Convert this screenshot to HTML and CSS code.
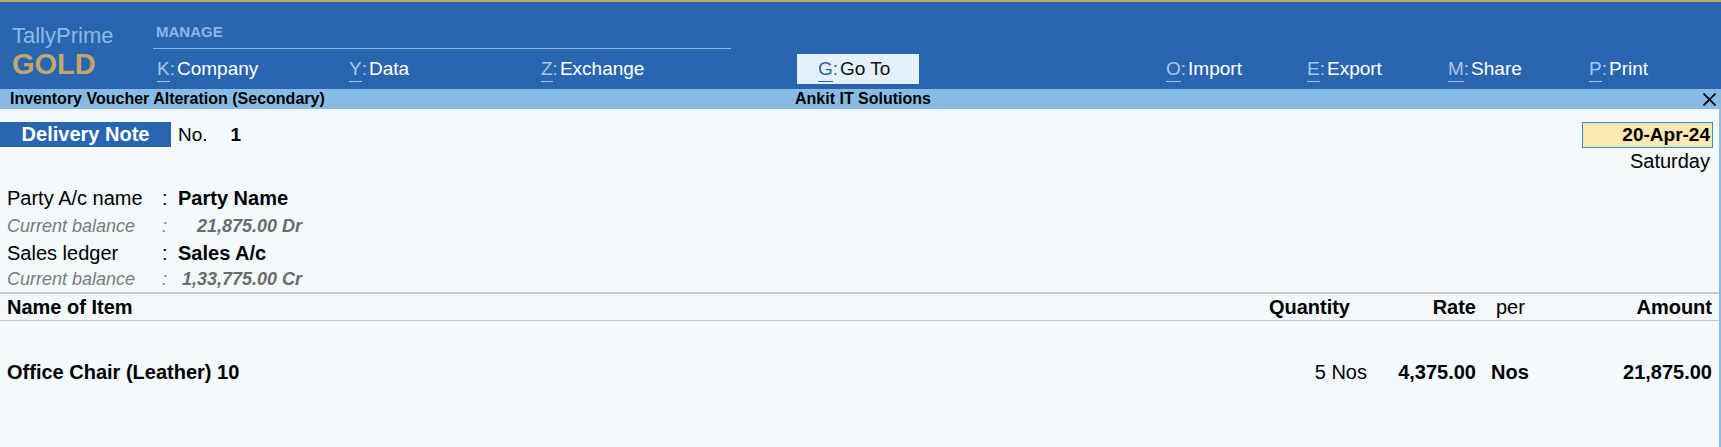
FILE: index.html
```html
<!DOCTYPE html>
<html lang="en">

<head>
    <meta charset="UTF-8">
    <meta name="viewport" content="width=device-width, initial-scale=1.0">
    <title>TallyPrime - Delivery Note</title>
    <link rel="stylesheet" href="styles.css">
</head>

<body>
    <div class="topbar">
        <div class="brand">
            <div class="brand-name">TallyPrime</div>
            <div class="brand-edition">GOLD</div>
        </div>

        <div class="menu-group">
            <div class="group-title">MANAGE</div>
            <div class="group-items">
                <span class="menu-item"><span class="key">K</span><span class="colon">:</span>Company</span>
                <span class="menu-item"><span class="key">Y</span><span class="colon">:</span>Data</span>
                <span class="menu-item"><span class="key">Z</span><span class="colon">:</span>Exchange</span>
            </div>
        </div>

        <div class="goto"><span class="key">G</span><span class="colon">:</span>Go To</div>

        <div class="tools">
            <span class="menu-item tool"><span class="key">O</span><span class="colon">:</span>Import</span>
            <span class="menu-item tool"><span class="key">E</span><span class="colon">:</span>Export</span>
            <span class="menu-item tool"><span class="key">M</span><span class="colon">:</span>Share</span>
            <span class="menu-item tool"><span class="key">P</span><span class="colon">:</span>Print</span>
        </div>
    </div>

    <div class="titlebar">
        <span class="title-left">Inventory Voucher Alteration (Secondary)</span>
        <span class="title-center">Ankit IT Solutions</span>
        <span class="title-close">
            <svg width="13" height="13" viewBox="0 0 13 13">
                <line x1="0.5" y1="0.5" x2="12.5" y2="12.5" stroke="#000" stroke-width="1.7" />
                <line x1="12.5" y1="0.5" x2="0.5" y2="12.5" stroke="#000" stroke-width="1.7" />
            </svg>
        </span>
    </div>

    <div class="voucher">
        <div class="voucher-head">
            <div class="voucher-type">
                <span class="type-badge">Delivery Note</span>
                <span class="no-label">No.</span>
                <span class="no-value">1</span>
            </div>
            <div class="voucher-date">
                <div class="date-box">20-Apr-24</div>
                <div class="day">Saturday</div>
            </div>
        </div>

        <div class="ledgers">
            <div class="field roomy">
                <span class="field-label">Party A/c name</span>
                <span class="field-sep">:</span>
                <span class="field-value">Party Name</span>
            </div>
            <div class="field sub roomy">
                <span class="field-label">Current balance</span>
                <span class="field-sep">:</span>
                <span class="field-value">21,875.00 Dr</span>
            </div>
            <div class="field">
                <span class="field-label">Sales ledger</span>
                <span class="field-sep">:</span>
                <span class="field-value">Sales A/c</span>
            </div>
            <div class="field sub">
                <span class="field-label">Current balance</span>
                <span class="field-sep">:</span>
                <span class="field-value">1,33,775.00 Cr</span>
            </div>
        </div>

        <div class="items">
            <div class="item-row item-head">
                <span class="col-name">Name of Item</span>
                <span class="col-qty">Quantity</span>
                <span class="col-rate">Rate</span>
                <span class="col-per">per</span>
                <span class="col-amount">Amount</span>
            </div>
            <div class="item-row item-line">
                <span class="col-name">Office Chair (Leather) 10</span>
                <span class="col-qty">5 Nos</span>
                <span class="col-rate">4,375.00</span>
                <span class="col-per">Nos</span>
                <span class="col-amount">21,875.00</span>
            </div>
        </div>
    </div>
</body>

</html>
```

FILE: styles.css
```css
html,
body {
    height: 100%;
}

body {
    margin: 0;
    display: flex;
    flex-direction: column;
    font-family: 'Liberation Sans', Arial, sans-serif;
    color: #000;
    background-color: #f3f9fd;
}

/* top menu bar */
.topbar {
    display: flex;
    align-items: flex-start;
    height: 87px;
    padding-left: 12px;
    background-color: #2a66b0;
    border-top: 2px solid #c4a66a;
    color: #fff;
    overflow: hidden;
}

.topbar > div {
    flex-shrink: 0;
}

.brand {
    width: 141px;
    padding-top: 21px;
}

.brand-name {
    font-size: 22px;
    line-height: 25px;
    color: #8db8e6;
}

.brand-edition {
    margin-top: 1px;
    font-size: 29px;
    line-height: 31px;
    font-weight: bold;
    color: #c4a66a;
}

.menu-group {
    width: 578px;
    padding-top: 21px;
}

.group-title {
    padding-left: 3px;
    padding-bottom: 7px;
    font-size: 15px;
    line-height: 18px;
    font-weight: bold;
    color: #8cb6e4;
    border-bottom: 1px solid #8cbbea;
}

.group-items {
    display: flex;
    padding-left: 4px;
    margin-top: 9px;
}

.menu-item {
    flex-shrink: 0;
    width: 192px;
    font-size: 19px;
    line-height: 22px;
    white-space: nowrap;
}

.key,
.colon {
    color: #a6c7ec;
}

.key {
    position: relative;
}

.key::after {
    content: '';
    position: absolute;
    left: 0;
    right: 0;
    top: calc(100% + 2px);
    height: 1px;
    background-color: currentColor;
}

.colon {
    margin-right: 2px;
}

.goto {
    box-sizing: border-box;
    width: 122px;
    height: 30px;
    margin-top: 52px;
    margin-left: 66px;
    padding: 4px 0 4px 21px;
    font-size: 19px;
    line-height: 22px;
    color: #111;
    background-color: #e4f0fb;
}

.goto .key,
.goto .colon {
    color: #2a66b0;
}

.tools {
    display: flex;
    margin-left: 247px;
    padding-top: 56px;
}

.menu-item.tool {
    width: 141px;
}

/* screen title */
.titlebar {
    display: grid;
    grid-template-columns: 1fr auto 1fr;
    align-items: center;
    height: 20px;
    padding: 0 5px 0 10px;
    background-color: #88bbe4;
    font-size: 16px;
    line-height: 20px;
    font-weight: bold;
}

.title-close {
    justify-self: end;
    display: flex;
}

/* voucher body */
.voucher {
    flex: 1;
    padding-top: 13px;
    border-right: 2px solid #8cbbe3;
    font-size: 20px;
}

.voucher-head {
    display: flex;
    justify-content: space-between;
    align-items: flex-start;
    padding-right: 6px;
}

.voucher-type {
    display: flex;
    align-items: center;
    height: 25px;
}

.type-badge {
    width: 171px;
    height: 25px;
    line-height: 25px;
    text-align: center;
    font-size: 20px;
    font-weight: bold;
    color: #fff;
    background-color: #2a66b0;
}

.no-label {
    margin-left: 7px;
    font-size: 19px;
}

.no-value {
    margin-left: 23px;
    font-size: 19px;
    font-weight: bold;
}

.voucher-date {
    text-align: right;
}

.date-box {
    width: 131px;
    box-sizing: border-box;
    height: 26px;
    padding-right: 2px;
    line-height: 24px;
    font-size: 19px;
    font-weight: bold;
    background-color: #fde7b3;
    border: 1px solid #3a8bd2;
}

.day {
    padding-right: 3px;
    line-height: 26px;
}

.ledgers {
    margin-top: 10px;
    padding-left: 7px;
}

.field {
    display: flex;
    line-height: 26px;
}

.field.roomy {
    line-height: 28px;
}

.field-label {
    width: 155px;
}

.field-sep {
    width: 16px;
}

.field-value {
    font-weight: bold;
}

.field.sub {
    font-size: 18px;
    font-style: italic;
    color: #7b7b7b;
}

.field.sub .field-value {
    width: 124px;
    text-align: right;
    color: #6b6b6b;
}

/* item table */
.item-row {
    display: grid;
    grid-template-columns: 1fr 120px 123px 70px 152px;
    padding: 0 7px;
    line-height: 26px;
    font-weight: bold;
    white-space: nowrap;
}

.item-head {
    border-top: 2px solid #c9c9c9;
    border-bottom: 1px solid #c9c9c9;
}

.item-line {
    margin-top: 38px;
}

.col-qty,
.col-rate,
.col-amount {
    text-align: right;
}

.col-rate {
    padding-right: 14px;
}

.item-head .col-qty {
    padding-right: 17px;
}

.item-head .col-per {
    padding-left: 6px;
    font-weight: normal;
}

.item-line .col-qty {
    font-weight: normal;
}

.item-line .col-per {
    padding-left: 1px;
}
```
